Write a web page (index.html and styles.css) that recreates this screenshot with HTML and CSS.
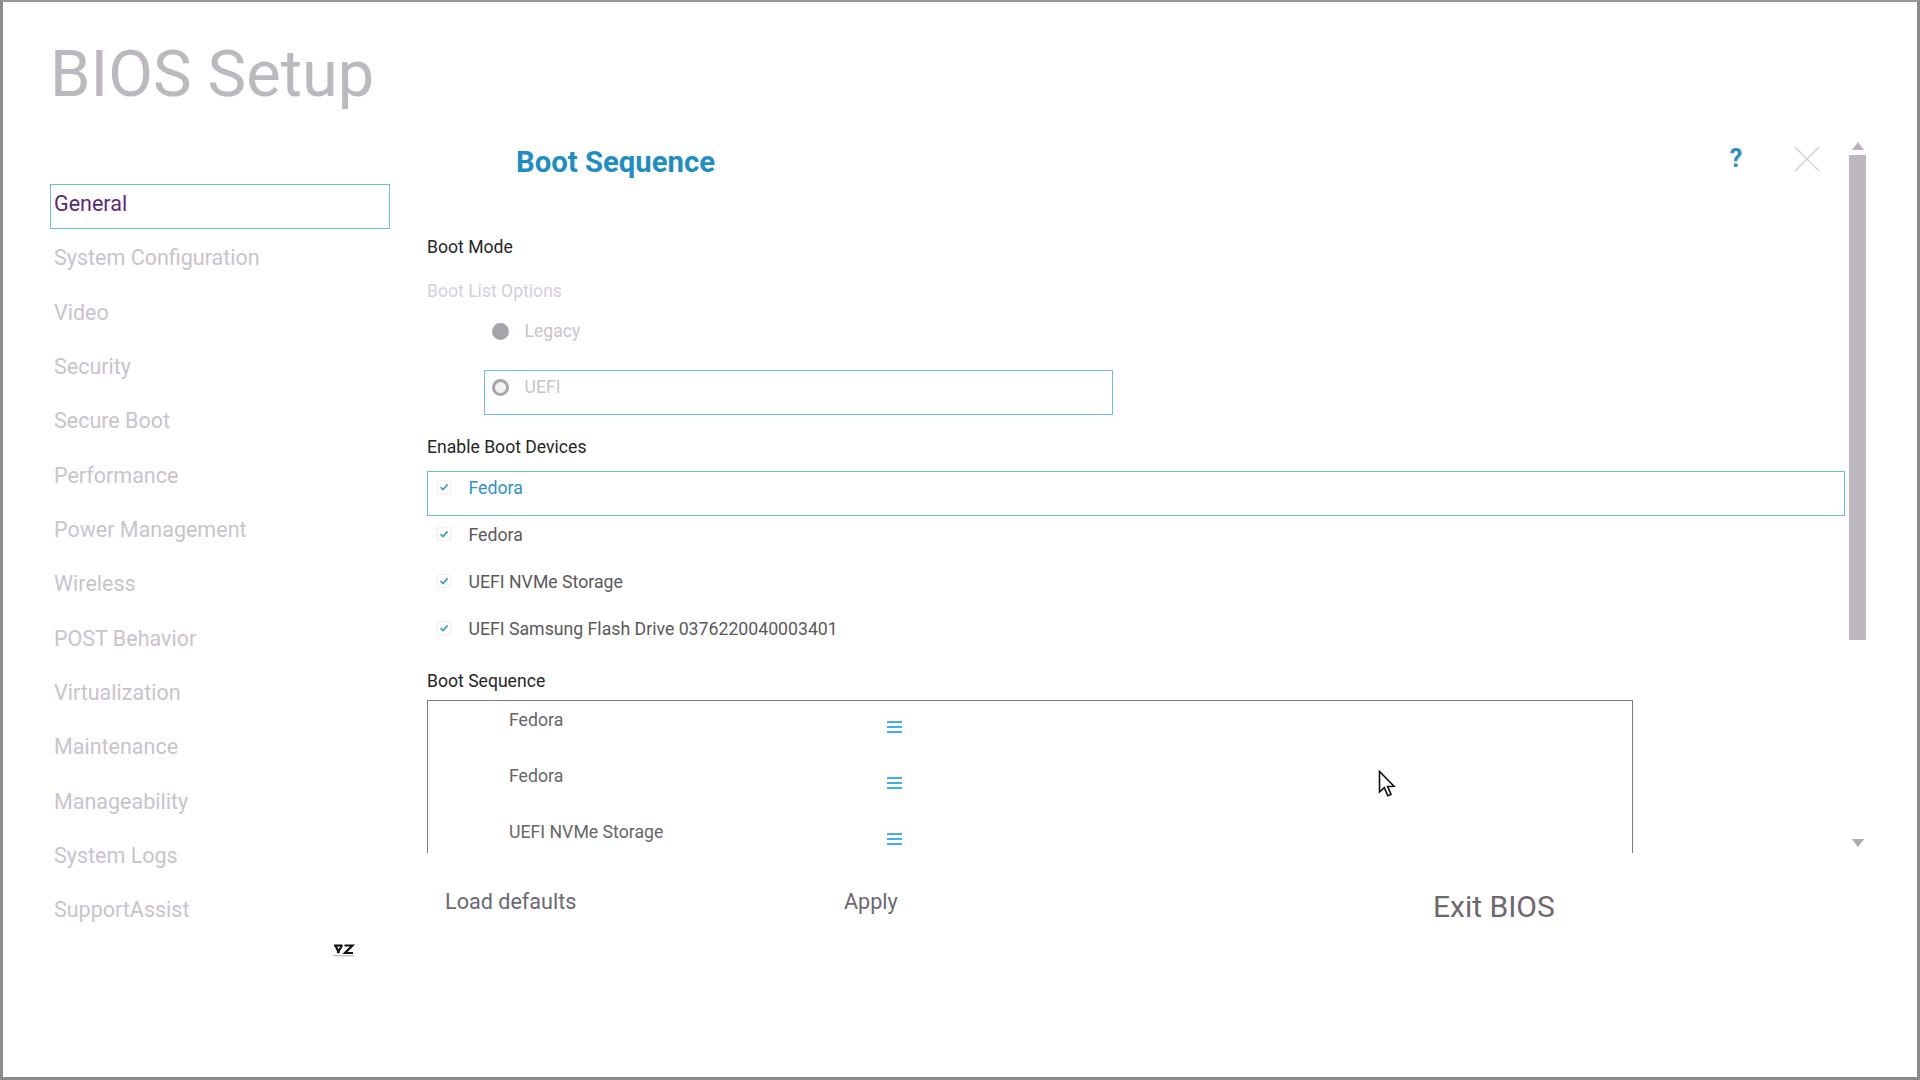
FILE: index.html
```html
<!DOCTYPE html>
<html lang="en">
<head>
<meta charset="utf-8">
<title>BIOS Setup</title>
<link rel="stylesheet" href="styles.css">
</head>
<body>
<div class="screen">
  <aside class="sidebar">
    <h1 class="title">BIOS Setup</h1>
    <nav class="nav">
      <div class="nav-item active">General</div>
      <div class="nav-item">System Configuration</div>
      <div class="nav-item">Video</div>
      <div class="nav-item">Security</div>
      <div class="nav-item">Secure Boot</div>
      <div class="nav-item">Performance</div>
      <div class="nav-item">Power Management</div>
      <div class="nav-item">Wireless</div>
      <div class="nav-item">POST Behavior</div>
      <div class="nav-item">Virtualization</div>
      <div class="nav-item">Maintenance</div>
      <div class="nav-item">Manageability</div>
      <div class="nav-item">System Logs</div>
      <div class="nav-item">SupportAssist</div>
    </nav>
    <div class="kbd-glyph">
      <svg width="22" height="14" viewBox="0 0 22 14">
        <path d="M1 2.5H9.5M2.5 2.5L6 10M9 2.5L4.5 10" stroke="#111" stroke-width="2.2" fill="none"/>
        <path d="M11.5 2.5H19.5L12 10H20" stroke="#111" stroke-width="2.2" fill="none"/>
        <path d="M0 12.8H21" stroke="#aaa" stroke-width="1"/>
      </svg>
    </div>
  </aside>

  <main class="main">
    <div class="viewport">
      <div class="content">
        <header class="page-header">
          <h2 class="page-title">Boot Sequence</h2>
          <span class="help">?</span>
          <span class="close">
            <svg width="28" height="28" viewBox="0 0 28 28"><path d="M2 2L26 26M26 2L2 26" stroke="#d2ced5" stroke-width="1.4" fill="none"/></svg>
          </span>
        </header>

        <div class="label label-dark lbl-bootmode">Boot Mode</div>
        <div class="label label-faint lbl-options">Boot List Options</div>
        <div class="radio-row legacy"><span class="radio filled"></span><span class="radio-text">Legacy</span></div>
        <div class="radio-box">
          <div class="radio-row"><span class="radio ring"></span><span class="radio-text">UEFI</span></div>
        </div>

        <div class="label label-dark lbl-enable">Enable Boot Devices</div>
        <div class="devices">
          <div class="device focused">
            <span class="check"><svg width="12" height="12" viewBox="0 0 12 12"><path d="M2.5 6.2L5 8.6L9.6 3.4" stroke="#3a9bd0" stroke-width="1.6" fill="none"/></svg></span>
            <span class="device-text">Fedora</span>
          </div>
          <div class="device">
            <span class="check"><svg width="12" height="12" viewBox="0 0 12 12"><path d="M2.5 6.2L5 8.6L9.6 3.4" stroke="#3a9bd0" stroke-width="1.6" fill="none"/></svg></span>
            <span class="device-text">Fedora</span>
          </div>
          <div class="device">
            <span class="check"><svg width="12" height="12" viewBox="0 0 12 12"><path d="M2.5 6.2L5 8.6L9.6 3.4" stroke="#3a9bd0" stroke-width="1.6" fill="none"/></svg></span>
            <span class="device-text">UEFI NVMe Storage</span>
          </div>
          <div class="device">
            <span class="check"><svg width="12" height="12" viewBox="0 0 12 12"><path d="M2.5 6.2L5 8.6L9.6 3.4" stroke="#3a9bd0" stroke-width="1.6" fill="none"/></svg></span>
            <span class="device-text">UEFI Samsung Flash Drive 0376220040003401</span>
          </div>
        </div>

        <div class="label label-dark lbl-seq">Boot Sequence</div>
        <div class="seq-box">
          <div class="seq-row"><span class="seq-text">Fedora</span><span class="drag"><i></i><i></i><i></i></span></div>
          <div class="seq-row"><span class="seq-text">Fedora</span><span class="drag"><i></i><i></i><i></i></span></div>
          <div class="seq-row"><span class="seq-text">UEFI NVMe Storage</span><span class="drag"><i></i><i></i><i></i></span></div>
        </div>
      </div>

      <div class="scrollbar">
        <span class="arrow-up"></span>
        <span class="thumb"></span>
        <span class="arrow-down"></span>
      </div>
    </div>

    <footer class="footer">
      <span class="btn btn-load">Load defaults</span>
      <span class="btn btn-apply">Apply</span>
      <span class="btn btn-exit">Exit BIOS</span>
    </footer>
  </main>

  <svg class="cursor" width="20" height="30" viewBox="0 0 20 30">
    <path d="M1.5 1.5L1.5 22L6.3 17.6L9.8 25.8L13 24.4L9.6 16.4L16 16.2Z" fill="#fff" stroke="#111" stroke-width="1.6" stroke-linejoin="miter"/>
  </svg>
</div>
</body>
</html>
```

FILE: styles.css
```css
* { box-sizing: border-box; }

html, body {
  margin: 0;
  padding: 0;
  background: #fff;
}

.screen {
  position: relative;
  width: 1920px;
  height: 1080px;
  display: flex;
  background: #fff;
  border-left: 3px solid #8c8c8c;
  border-top: 2px solid #9a9a9a;
  border-right: 3px solid #8a8a8a;
  border-bottom: 3px solid #8a8a8a;
  font-family: Roboto, "Liberation Sans", sans-serif;
  overflow: hidden;
}

/* Sidebar */
.sidebar {
  width: 424px;
  flex: none;
  padding-left: 47px;
  display: flex;
  flex-direction: column;
}

.title {
  margin: 40.3px 0 0 0;
  font-size: 65px;
  line-height: 65px;
  font-weight: 400;
  color: #bcb8bf;
}

.nav {
  margin-top: 76.7px;
  width: 340px;
  display: flex;
  flex-direction: column;
  gap: 9.35px;
}

.nav-item {
  height: 45px;
  border: 1px solid transparent;
  padding: 1px 3px 6px;
  font-size: 21.5px;
  line-height: 36px;
  color: #c9c3cc;
  white-space: nowrap;
}

.nav-item.active {
  border-color: #6cc3cc;
  color: #5c2a7c;
}

.kbd-glyph {
  margin: 8px 0 0 283px;
  height: 14px;
}
.kbd-glyph svg { display: block; }

/* Main */
.main {
  flex: 1;
  min-width: 0;
  padding-top: 138px;
  padding-right: 51px;
  display: flex;
  flex-direction: column;
}

.viewport {
  display: flex;
  height: 713px;
}

.content {
  flex: 1;
  min-width: 0;
  overflow: hidden;
}

.page-header {
  margin-top: 7px;
  height: 34px;
  display: flex;
  align-items: flex-start;
}

.page-title {
  margin: -2px 0 0 89px;
  font-size: 29.3px;
  line-height: 34px;
  font-weight: 700;
  color: #1f8dc5;
}

.help {
  margin-left: auto;
  width: 24px;
  height: 24px;
  line-height: 24px;
  text-align: center;
  font-size: 25px;
  font-weight: 700;
  color: #2b8fc6;
}

.close {
  margin: -2px 24px 0 45px;
  width: 28px;
  height: 28px;
}
.close svg { display: block; }

.label {
  font-size: 17.6px;
  line-height: 24px;
  height: 24px;
  padding-top: 1px;
  white-space: nowrap;
}
.label-dark { color: #262626; }
.label-faint { color: #d5cfd9; }

.lbl-bootmode { margin-top: 53px; }
.lbl-options { margin-top: 20px; }
.lbl-enable { margin-top: 19px; }
.lbl-seq { margin-top: 11px; }

.radio-row {
  display: flex;
  align-items: center;
  height: 24px;
}

.legacy {
  margin-top: 17px;
  padding-left: 65px;
}

.radio {
  width: 17px;
  height: 17px;
  border-radius: 50%;
  flex: none;
}
.radio.filled { background: #a7a3aa; }
.radio.ring {
  border: 3px solid #a9a5ac;
  background: #f3f3f3;
}

.radio-text {
  margin-left: 15.5px;
  font-size: 17.6px;
  color: #c9c3cc;
}

.radio-box {
  margin: 27px 0 0 57px;
  width: 629px;
  height: 45px;
  border: 1px solid #6cc3cc;
  padding: 4px 0 0 7px;
}

.devices {
  margin-top: 13px;
  display: flex;
  flex-direction: column;
  gap: 2px;
}

.device {
  height: 45px;
  border: 1px solid transparent;
  padding: 3px 0 0 10px;
  display: flex;
  align-items: flex-start;
}
.device.focused { border-color: #6cc3cc; }

.check {
  margin-top: 6px;
  width: 12px;
  height: 12px;
  flex: none;
  box-shadow: 0 0 0 1px #f1f1f3;
}
.check svg { display: block; }

.device-text {
  margin-left: 18.5px;
  padding-top: 1px;
  font-size: 17.7px;
  line-height: 24px;
  color: #5a5a5a;
  white-space: nowrap;
}
.device.focused .device-text { color: #2f93c7; }

.seq-box {
  margin-top: 8px;
  width: 1206px;
  border: 1px solid #7a7a7a;
  border-bottom: none;
}

.seq-row {
  height: 56px;
  display: flex;
  align-items: flex-start;
  padding-left: 81px;
}

.seq-text {
  width: 378px;
  padding-top: 7px;
  font-size: 17.7px;
  line-height: 24px;
  color: #666;
  white-space: nowrap;
}

.drag {
  margin-top: 20px;
  width: 15px;
  height: 12px;
  display: flex;
  flex-direction: column;
  justify-content: space-between;
}
.drag i {
  display: block;
  height: 2.4px;
  background: #45b0e0;
}

/* Scrollbar */
.scrollbar {
  width: 17px;
  margin-left: 4px;
  display: flex;
  flex-direction: column;
  align-items: center;
}

.arrow-up {
  margin-top: 2px;
  width: 0;
  height: 0;
  border-left: 6px solid transparent;
  border-right: 6px solid transparent;
  border-bottom: 8px solid #b8b3bb;
}

.thumb {
  margin-top: 5px;
  align-self: stretch;
  height: 485px;
  background: #bdb8c0;
}

.arrow-down {
  margin-top: auto;
  margin-bottom: 6px;
  width: 0;
  height: 0;
  border-left: 6px solid transparent;
  border-right: 6px solid transparent;
  border-top: 8px solid #ababab;
}

/* Footer */
.footer {
  padding-top: 35px;
  display: flex;
  align-items: flex-start;
}

.btn {
  white-space: nowrap;
  color: #6d6870;
}

.btn-load {
  margin-left: 18px;
  width: 399px;
  font-size: 21.6px;
  line-height: 28px;
}

.btn-apply {
  width: 589px;
  font-size: 21.6px;
  line-height: 28px;
}

.btn-exit {
  margin-top: 0;
  font-size: 30px;
  line-height: 37px;
}

.cursor {
  position: absolute;
  left: 1375px;
  top: 768px;
}
```
